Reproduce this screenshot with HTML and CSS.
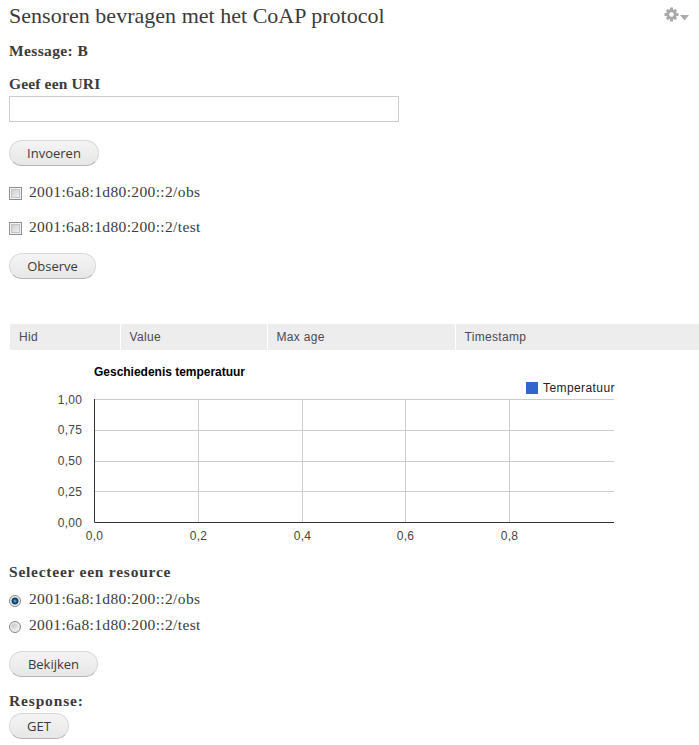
FILE: index.html
```html
<!DOCTYPE html>
<html lang="nl">
<head>
<meta charset="utf-8">
<title>Sensoren bevragen met het CoAP protocol</title>
<link rel="stylesheet" href="styles.css">
</head>
<body>
<main class="block">
  <header class="block-head">
    <h2 class="title">Sensoren bevragen met het CoAP protocol</h2>
    <svg class="gear" width="26" height="16" viewBox="0 0 26 16">
      <g fill="#a9a9a9">
        <g><rect x="6" y="0.500" width="3" height="14"/><rect x="0.500" y="6" width="14" height="3"/></g>
        <g transform="rotate(45 7.5 7.5)"><rect x="6" y="1" width="3" height="13"/><rect x="1" y="6" width="13" height="3"/></g>
        <circle cx="7.5" cy="7.5" r="5"/>
        <path d="M16 8h9l-4.500 5.500z"/>
      </g>
      <circle cx="7.500" cy="7.500" r="2.300" fill="#fff"/>
    </svg>
  </header>

  <form class="form">
    <p class="label message">Message: B</p>
    <label class="label uri-label" for="uri">Geef een URI</label>
    <input class="field" id="uri" type="text">
    <button class="button invoeren" type="button">Invoeren</button>
    <label class="option"><input class="check" type="checkbox"><span class="uri obs">2001:6a8:1d80:200::2/obs</span></label>
    <label class="option"><input class="check" type="checkbox"><span class="uri test">2001:6a8:1d80:200::2/test</span></label>
    <button class="button observe" type="button">Observe</button>
  </form>

  <table class="readings">
    <thead><tr><th class="c1">Hid</th><th class="c2">Value</th><th class="c3">Max age</th><th class="c4">Timestamp</th></tr></thead>
  </table>

  <svg class="chart" width="690" height="205" viewBox="9 350 690 205">
    <text class="chart-title" x="94" y="376" textLength="151">Geschiedenis temperatuur</text>
    <rect x="526" y="382" width="12" height="12" fill="#36c"/>
    <text class="legend" x="543" y="392" textLength="71.500">Temperatuur</text>
    <path class="grid" d="M95 399.500H614M95 430.500H614M95 461.500H614M95 491.500H614M198.500 399V522M302.500 399V522M405.500 399V522M509.500 399V522"/>
    <path class="axis" d="M94.500 399V522.500H614"/>
    <g class="tick end">
      <text x="82" y="404">1,00</text><text x="82" y="434">0,75</text><text x="82" y="465">0,50</text><text x="82" y="496">0,25</text><text x="82" y="527">0,00</text>
    </g>
    <g class="tick mid">
      <text x="94.500" y="540">0,0</text><text x="198.500" y="540">0,2</text><text x="302.500" y="540">0,4</text><text x="405.500" y="540">0,6</text><text x="509.500" y="540">0,8</text>
    </g>
  </svg>

  <form class="form">
    <p class="label select">Selecteer een resource</p>
    <label class="choice"><input class="radio" type="radio" name="resource" checked><span class="uri obs">2001:6a8:1d80:200::2/obs</span></label>
    <label class="choice"><input class="radio" type="radio" name="resource"><span class="uri test">2001:6a8:1d80:200::2/test</span></label>
    <button class="button bekijken" type="button">Bekijken</button>
    <p class="label response">Response:</p>
    <button class="button get" type="button">GET</button>
  </form>
</main>
</body>
</html>
```
FILE: styles.css
```css
* { box-sizing: border-box; }
body {
  margin: 0;
  background: #fff;
  color: #3b3b3b;
  font-family: Georgia, "Liberation Serif", serif;
  overflow: hidden;
}
.block { padding-left: 9px; height: 745px; }
.block-head {
  display: flex;
  justify-content: space-between;
  height: 41px;
  padding: 4px 9px 0 0;
}
.title {
  margin: 0;
  font-size: 22px;
  font-weight: 400;
  line-height: 24px;
  letter-spacing: 0.02px;
  white-space: nowrap;
}
.gear { margin-top: 3px; }
.form { display: flex; flex-direction: column; align-items: flex-start; margin: 0; }
.label {
  display: block;
  margin: 0;
  height: 20px;
  line-height: 20px;
  font-size: 15.5px;
  font-weight: 700;
  white-space: nowrap;
}
.message { letter-spacing: 0.38px; margin-bottom: 13px; }
.uri-label { letter-spacing: 0.15px; height: 22px; }
.field {
  width: 390px;
  height: 26px;
  border: 1px solid #ccc;
  background: #fff;
  padding: 2px 4px;
}
.button {
  height: 26px;
  padding: 0 0 1px;
  border: 1px solid #d8d8d8;
  border-bottom-color: #b4b4b4;
  border-radius: 13px;
  background: linear-gradient(#f4f4f4, #e7e7e7);
  color: #3a3a3a;
  font: 13px/24px "Open Sans", "Noto Sans", sans-serif;
  text-align: center;
}
.invoeren { width: 90px; margin: 18px 0 16px; }
.observe { width: 87px; margin: 1px 0 45px; }
.bekijken { width: 89px; margin: 13px 0 14px; }
.get { width: 60px; }
.option, .choice { display: flex; align-items: center; }
.option { height: 21px; margin-bottom: 14px; }
.option .uri { padding-bottom: 2px; }
.choice { height: 26px; }
.uri { font-size: 15.5px; line-height: 20px; white-space: nowrap; }
.obs { letter-spacing: 0.36px; }
.test { letter-spacing: 0.36px; }
.check, .radio { appearance: none; flex: none; }
.check {
  width: 13px;
  height: 13px;
  margin: 2px 7px 0 0;
  border: 1px solid #8e8f8f;
  background: linear-gradient(135deg, #c4c8cd, #f6f6f6) padding-box;
  box-shadow: inset 0 0 0 1px #f4f4f4, inset 0 0 0 2px #c0c3c8;
}
.radio {
  width: 12px;
  height: 12px;
  margin: 3px 8px 0 0;
  border: 1px solid #858585;
  border-radius: 50%;
  background: radial-gradient(circle at 35% 35%, #ccc, #f0f0f0 70%);
  box-shadow: inset 0 0 0 1px #f4f4f4;
}
.radio:checked {
  background: radial-gradient(circle, #6fc8e8 0, #1c6a96 1.5px, #12314d 3px, #e8eaec 4px);
}
.readings {
  width: 689px;
  height: 26px;
  margin-left: 1px;
  border-collapse: collapse;
  table-layout: fixed;
}
.readings th {
  height: 26px;
  padding: 0 0 0 9px;
  border-right: 1px solid #fff;
  background: #ededed;
  color: #4a4a52;
  font: 12px/26px "Liberation Sans", Arial, sans-serif;
  letter-spacing: 0.33px;
  text-align: left;
}
.readings th:last-child { border-right: 0; }
.c1 { width: 110px; }
.c2 { width: 147px; }
.c3 { width: 188px; }
.chart { display: block; font-family: "Liberation Sans", Arial, sans-serif; font-size: 12px; }
.chart-title { font-weight: 700; fill: #000; }
.legend { fill: #222; }
.tick { fill: #444; letter-spacing: 0.2px; }
.end { text-anchor: end; }
.mid { text-anchor: middle; }
.grid { stroke: #ccc; fill: none; }
.axis { stroke: #333; fill: none; }
.select { margin-top: 7px; height: 24px; letter-spacing: 0.76px; }
.response { letter-spacing: 0.84px; height: 22px; }
```
